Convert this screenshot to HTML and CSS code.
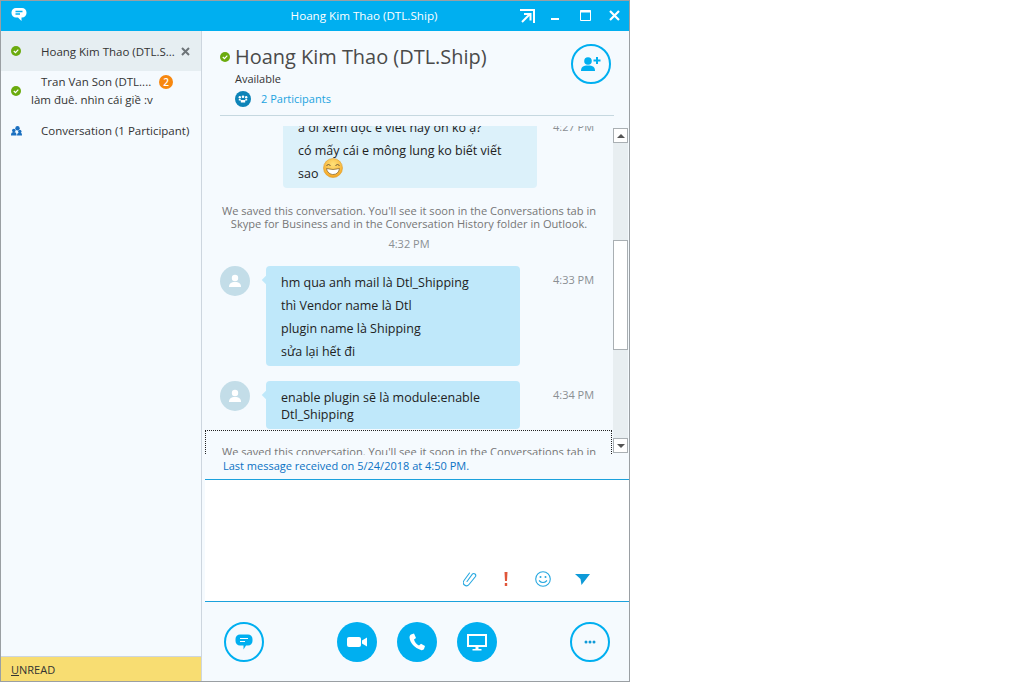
FILE: index.html
```html
<!DOCTYPE html>
<html lang="vi">
<head>
<meta charset="utf-8">
<title>Hoang Kim Thao (DTL.Ship)</title>
<link rel="stylesheet" href="styles.css">
</head>
<body>
<div class="window">
  <header class="titlebar">
    <svg class="app-icon" width="16" height="16" viewBox="0 0 16 16"><path d="M5 1h6a4.500 4.500 0 0 1 4.500 4.500v.5A4.500 4.500 0 0 1 11 10.500h-.5V14L7 10.500H5A4.500 4.500 0 0 1 .5 6v-.5A4.500 4.500 0 0 1 5 1z" fill="#fff"/><path d="M4.500 4.500h7M4.500 7h4.500" stroke="#00aff0" stroke-width="1.300"/></svg>
    <div class="title">Hoang Kim Thao (DTL.Ship)</div>
    <div class="win-controls">
      <svg class="wc wc-pop" width="15" height="14" viewBox="0 0 15 14"><path d="M0 1h14v13M2 13l8-8M4 5h6.500v6.500" fill="none" stroke="#fff" stroke-width="2"/></svg>
      <svg class="wc wc-min" width="9" height="14" viewBox="0 0 9 14"><path d="M0 11h8" stroke="#fff" stroke-width="2"/></svg>
      <svg class="wc wc-max" width="11" height="11" viewBox="0 0 11 11"><path d="M.5.500h10v10H.500z" fill="none" stroke="#fff"/><path d="M0 1.500h11" stroke="#fff" stroke-width="2"/></svg>
      <svg class="wc wc-close" width="11" height="11" viewBox="0 0 11 11"><path d="M1 1l9 9M10 1l-9 9" stroke="#fff" stroke-width="2.200"/></svg>
    </div>
  </header>
  <div class="body">
    <aside class="sidebar">
      <div class="conv conv-active">
        <span class="dot"><svg width="10" height="10" viewBox="0 0 10 10"><circle cx="5" cy="5" r="5" fill="#6bab0e"/><path d="M2.800 5l1.700 1.700 2.800-3" fill="none" stroke="#fff" stroke-width="1.200"/></svg></span>
        <span class="conv-name">Hoang Kim Thao (DTL.S...</span>
        <svg class="conv-x" width="9" height="9" viewBox="0 0 9 9"><path d="M1 1l7 7M8 1l-7 7" stroke="#6d7478" stroke-width="2"/></svg>
      </div>
      <div class="conv conv-two">
        <span class="dot"><svg width="10" height="10" viewBox="0 0 10 10"><circle cx="5" cy="5" r="5" fill="#6bab0e"/><path d="M2.800 5l1.700 1.700 2.800-3" fill="none" stroke="#fff" stroke-width="1.200"/></svg></span>
        <div class="conv-lines">
          <div class="conv-top"><span class="conv-name">Tran Van Son (DTL....</span><span class="badge">2</span></div>
          <div class="conv-sub">làm đuê. nhìn cái giề :v</div>
        </div>
      </div>
      <div class="conv conv-group">
        <span class="dot"><svg width="11" height="10" viewBox="0 0 11 10"><circle cx="6.500" cy="2.200" r="2.200" fill="#1a6fc0"/><circle cx="2.800" cy="4.500" r="1.800" fill="#1a6fc0"/><circle cx="8.800" cy="5.500" r="1.700" fill="#1a6fc0"/><path d="M0 9c0-2 1-3 2.800-3s2.800 1 2.800 3.500H0zM6 9.500c0-2 1-3 2.800-3S11 7.500 11 9.500z" fill="#1a6fc0"/></svg></span>
        <span class="conv-name">Conversation (1 Participant)</span>
      </div>
      <div class="unread"><span class="ul">U</span>NREAD</div>
    </aside>
    <main class="main">
      <section class="head">
        <div class="head-info">
          <div class="head-name">
            <svg width="10" height="10" viewBox="0 0 10 10"><circle cx="5" cy="5" r="5" fill="#6bab0e"/><path d="M2.800 5l1.700 1.700 2.800-3" fill="none" stroke="#fff" stroke-width="1.200"/></svg>
            <h1>Hoang Kim Thao (DTL.Ship)</h1>
          </div>
          <div class="presence">Available</div>
          <div class="participants">
            <svg width="16" height="16" viewBox="0 0 16 16"><circle cx="8" cy="8" r="8" fill="#0d84b8"/><circle cx="4.800" cy="6.300" r="1.200" fill="#fff"/><circle cx="8" cy="5.800" r="1.300" fill="#fff"/><circle cx="11.200" cy="6.300" r="1.200" fill="#fff"/><path d="M3.800 8h1.900v1h4.600V8h1.900v1.500h-2v2H5.800v-2h-2z" fill="#fff"/></svg>
            <span>2 Participants</span>
          </div>
        </div>
        <button class="circle outline add-btn"><svg width="22" height="16" viewBox="0 0 22 16"><circle cx="8" cy="5" r="3.800" fill="#00aff0"/><path d="M1 15c0-4 2-5.500 7-5.500s7 1.500 7 5.500z" fill="#00aff0"/><path d="M17 1v7M13.500 4.500h7" stroke="#00aff0" stroke-width="2"/></svg></button>
      </section>
      <div class="rule"></div>
      <section class="transcript">
        <div class="log">
          <div class="log-inner">
            <div class="msg msg-first">
              <div class="bubble light">
                <p>à ơi xem đọc e viết này ổn ko ạ?</p>
                <p>có mấy cái e mông lung ko biết viết</p>
                <p class="emoji-line">sao <svg class="emoji" width="20" height="20" viewBox="0 0 20 20"><defs><radialGradient id="eg" cx="50%" cy="30%" r="70%"><stop offset="0" stop-color="#ffe27a"/><stop offset="1" stop-color="#f5a623"/></radialGradient></defs><circle cx="10" cy="10" r="9.500" fill="url(#eg)" stroke="#dd9a2a" stroke-width=".6"/><path d="M3.500 7.500q2-2 4 0M12.500 7.500q2-2 4 0" fill="none" stroke="#6d5a3a" stroke-width="1"/><path d="M3.500 10.500q6.500 2 13 0-1 6-6.500 6s-5.500 0-6.500-6z" fill="#fff" stroke="#8a6a30" stroke-width=".8"/></svg></p>
              </div>
              <time>4:27 PM</time>
            </div>
            <div class="notice">We saved this conversation. You'll see it soon in the Conversations tab in Skype for Business and in the Conversation History folder in Outlook.</div>
            <div class="notice-time">4:32 PM</div>
            <div class="msg">
              <span class="avatar"><svg width="14" height="14" viewBox="0 0 14 14"><circle cx="7" cy="4" r="3.200" fill="#fff"/><path d="M1 13c0-3.500 2-5 6-5s6 1.500 6 5z" fill="#fff"/></svg></span>
              <div class="bubble">
                <p>hm qua anh mail là Dtl_Shipping</p>
                <p>thì Vendor name là Dtl</p>
                <p>plugin name là Shipping</p>
                <p>sửa lại hết đi</p>
              </div>
              <time>4:33 PM</time>
            </div>
            <div class="msg">
              <span class="avatar"><svg width="14" height="14" viewBox="0 0 14 14"><circle cx="7" cy="4" r="3.200" fill="#fff"/><path d="M1 13c0-3.500 2-5 6-5s6 1.500 6 5z" fill="#fff"/></svg></span>
              <div class="bubble tight">
                <p>enable plugin sẽ là module:enable Dtl_Shipping</p>
              </div>
              <time>4:34 PM</time>
            </div>
            <div class="notice">We saved this conversation. You'll see it soon in the Conversations tab in Skype for Business and in the Conversation History folder in Outlook.</div>
          </div>
          <div class="focus-box"></div>
        </div>
        <div class="scrollbar">
          <div class="sb-btn"><i class="arrow up"></i></div>
          <div class="sb-gap-top"></div>
          <div class="sb-thumb"></div>
          <div class="sb-gap-bottom"></div>
          <div class="sb-btn"><i class="arrow down"></i></div>
        </div>
      </section>
      <div class="last-msg">Last message received on 5/24/2018 at 4:50 PM.</div>
      <section class="compose">
        <div class="compose-tools">
          <svg width="14" height="16" viewBox="0 0 14 16"><path d="M4 10.500L9.500 3a2 2 0 0 1 3 2.500L6 13.500a3.200 3.200 0 0 1-5-4L6.500 2" fill="none" stroke="#27a8e0" stroke-width="1.100" stroke-linecap="round"/></svg>
          <svg width="4" height="14" viewBox="0 0 4 14"><path d="M.5 0h3l-.5 9H1zM.8 11h2.400v3H.8z" fill="#e0563a"/></svg>
          <svg width="16" height="16" viewBox="0 0 16 16"><circle cx="8" cy="8" r="7.300" fill="none" stroke="#27a8e0" stroke-width="1.100"/><circle cx="5.500" cy="6" r="1" fill="#27a8e0"/><circle cx="10.500" cy="6" r="1" fill="#27a8e0"/><path d="M4 9.500q4 4 8 0" fill="none" stroke="#27a8e0" stroke-width="1.100"/></svg>
          <svg width="15" height="11" viewBox="0 0 15 11"><path d="M0 0h15L6.500 11 5.500 5z" fill="#0e9ad8"/></svg>
        </div>
      </section>
      <section class="actions">
        <button class="circle outline"><svg width="18" height="16" viewBox="0 0 18 16"><path d="M5 .5h8a4.500 4.500 0 0 1 4.500 4.500v2A4.500 4.500 0 0 1 13 11.500h-2L8.500 15.500v-4H5A4.500 4.500 0 0 1 .5 7V5A4.500 4.500 0 0 1 5 .5z" fill="#00aff0"/><path d="M5 4.500h8M5 7.500h5" stroke="#fff" stroke-width="1.100"/></svg></button>
        <div class="action-mid">
          <button class="circle solid"><svg width="20" height="10" viewBox="0 0 20 10"><rect x="0" y="0" width="14" height="10" rx="2" fill="#fff"/><path d="M15 3.500L20 .5v9l-5-3z" fill="#fff"/></svg></button>
          <button class="circle solid"><svg width="18" height="18" viewBox="0 0 18 18"><path d="M3 1.500L6 .5l2 4.500-2 1.500c.5 2.500 2.500 4.800 5 6l2-1.800 4 2.300-1 3c-.5 1-2 1.500-3 1C6.500 15 2 10 1.500 4.500c0-1.300.5-2.500 1.500-3z" fill="#fff"/></svg></button>
          <button class="circle solid"><svg width="20" height="17" viewBox="0 0 20 17"><path d="M1 1h18v11H1z" fill="none" stroke="#fff" stroke-width="2"/><path d="M8.500 13h3v2h-3zM5.500 15h9v1.500h-9z" fill="#fff"/></svg></button>
        </div>
        <button class="circle outline"><svg width="12" height="4" viewBox="0 0 12 4"><circle cx="2" cy="2" r="1.500" fill="#0e9ad8"/><circle cx="6" cy="2" r="1.500" fill="#0e9ad8"/><circle cx="10" cy="2" r="1.500" fill="#0e9ad8"/></svg></button>
      </section>
    </main>
  </div>
</div>
</body>
</html>
```
FILE: styles.css
```css
* { box-sizing: border-box; }
html, body { margin: 0; padding: 0; background: #fff; }
body { font-family: "Open Sans", "Noto Sans", sans-serif; font-size: 11.500px; color: #333; }
svg { display: block; flex: none; }
p { margin: 0; }

.window {
  width: 630px; height: 682px;
  border: 1px solid #9a9fa3;
  display: flex; flex-direction: column;
  background: #f5fafe;
}

.titlebar {
  height: 30px; flex: none;
  background: #00aff0; color: #fff;
  display: flex; align-items: center;
  padding-left: 10px;
}
.app-icon { margin-bottom: 2px; }
.title {
  flex: 1; text-align: center; font-size: 11.650px;
  padding-left: 165px;
  margin-right: -15px;
  padding-bottom: 1px;
}
.win-controls { display: flex; align-items: center; width: 108px; flex: none; padding-right: 9px; }
.wc-pop { margin-left: -1px; margin-bottom: 1px; }
.wc-min { margin-left: 16px; margin-bottom: 3px; }
.wc-max { margin-left: 20px; margin-bottom: 2px; }
.wc-close { margin-left: 18px; margin-bottom: 2px; }

.body { flex: 1; display: flex; min-height: 0; }

.sidebar {
  width: 201px; flex: none;
  border-right: 1px solid #cdd6df;
  display: flex; flex-direction: column;
}
.conv { display: flex; align-items: center; height: 40px; padding-left: 10px; }
.dot { width: 30px; flex: none; }
.conv-active { background: #e6eef2; }
.conv-active .conv-name { flex: 1; }
.conv-x { margin-right: 11px; }
.conv-two { height: 41px; }
.conv-two .dot { margin-top: -2px; }
.conv-lines { margin-left: -10px; padding-bottom: 3px; }
.conv-top { padding-left: 10px; display: flex; align-items: center; }
.conv-sub { line-height: 17px; }
.conv-top .conv-name { line-height: 18px; }
.badge {
  width: 14px; height: 14px; border-radius: 50%;
  background: #f7870f; color: #fff;
  font-size: 10px; font-weight: 600; line-height: 14px; text-align: center;
  margin-left: 8px;
}
.conv-group { height: 40px; }
.conv-group .conv-name { padding-bottom: 3px; }
.conv-group .dot { margin-top: -2px; }
.unread {
  margin-top: auto; height: 25px;
  background: #f8dd72; border-top: 1px solid #cdd6df;
  padding-left: 10px; line-height: 25px; font-size: 11px;
}
.ul { text-decoration: underline; }

.main { flex: 1; min-width: 0; display: flex; flex-direction: column; padding-left: 3px; }

.head {
  height: 84px; flex: none;
  display: flex; justify-content: space-between;
  padding: 12px 18px 0 15px;
}
.head-name { display: flex; align-items: center; gap: 5px; height: 28px; }
.head-name h1 { margin: 0; font-size: 19.950px; font-weight: 400; color: #4a4a4a; line-height: 28px; }
.presence { margin-left: 15px; font-size: 11px; line-height: 17px; margin-top: -1px; }
.participants { display: flex; align-items: center; gap: 10px; margin: 3px 0 0 15px; color: #1ba3e0; font-size: 11px; line-height: 17px; }

.circle {
  width: 40px; height: 40px; border-radius: 50%;
  padding: 0; background: transparent; border: none;
  display: flex; align-items: center; justify-content: center;
  flex: none;
}
.outline { border: 2px solid #00aff0; }
.solid { background: #00aff0; }
.add-btn { margin-top: 1px; }

.rule { height: 1px; flex: none; margin: 0 0 0 15px; width: 394px; background: #c6d8e0; }

.transcript { height: 328px; flex: none; display: flex; margin-top: 10px; }
.log { width: 408px; flex: none; overflow: hidden; position: relative; height: 329px; }
.log-inner { margin-top: -10px; }

.msg { display: flex; margin-left: 15px; }
.msg + .msg { margin-top: 15px; }
.msg-first { padding-left: 63px; }
.avatar {
  width: 30px; height: 30px; border-radius: 50%; background: #c3dde8;
  display: flex; align-items: center; justify-content: center; flex: none;
  margin-right: 16px;
}
.bubble {
  width: 254px; height: 100px; padding: 5px 15px 0;
  background: #bfe8fa; border-radius: 4px;
  color: #222; font-size: 12.500px; position: relative; flex: none;
}
.bubble::before {
  content: ""; position: absolute; left: -3px; top: 11px;
  width: 6px; height: 6px; background: inherit; transform: rotate(45deg);
}
.bubble p { line-height: 23px; }
.light { background: #dcf1fa; height: 72px; padding-top: 0; }
.light::before { display: none; }
.tight { height: 48px; padding-top: 8px; }
.tight p { line-height: 17px; }
.emoji-line { display: flex; align-items: center; gap: 5px; }
.emoji { margin-top: -12px; }
time { margin-left: 33px; padding-top: 6px; font-size: 11px; color: #8a8f93; white-space: nowrap; }
.msg-first time { margin-left: 16px; padding-top: 4px; line-height: 14px; }

.notice { margin: 16px 0 0; padding: 0 10px; text-align: center; font-size: 11.100px; line-height: 13px; color: #767676; }
.notice-time { text-align: center; font-size: 11px; color: #8a8f93; margin-top: 7px; line-height: 14px; margin-bottom: 15px; }

.focus-box { position: absolute; left: 0; right: 1px; top: 304px; height: 40px; border: 1px dotted #222; }

.scrollbar { width: 15px; padding-top: 2px; height: 327px; display: flex; flex-direction: column; }
.sb-btn { height: 15px; border: 1px solid #a9afb3; background: #fff; display: flex; align-items: center; justify-content: center; flex: none; }
.sb-gap-top { height: 97px; background: #e8eef1; }
.sb-thumb { height: 110px; background: #fff; border: 1px solid #a9afb3; }
.sb-gap-bottom { flex: 1; background: #e8eef1; }
.arrow { width: 0; height: 0; border-left: 4px solid transparent; border-right: 4px solid transparent; display: block; }
.up { border-bottom: 4px solid #555; }
.down { border-top: 4px solid #555; }

.last-msg { height: 25px; flex: none; margin-top: 1px; padding-left: 18px; color: #0a72c4; font-size: 11px; line-height: 22px; border-bottom: 1px solid #1ba1dc; }

.compose { height: 122px; flex: none; background: #fff; border-bottom: 1px solid #1ba1dc; display: flex; align-items: flex-end; justify-content: flex-end; }
.compose-tools { display: flex; align-items: center; padding: 0 39px 14px 0; }
.compose-tools svg:nth-child(2) { margin-left: 27px; }
.compose-tools svg:nth-child(3) { margin-left: 27px; }
.compose-tools svg:nth-child(4) { margin-left: 24px; }

.actions { flex: 1; display: flex; align-items: center; justify-content: space-between; padding: 1px 19px 0; }
.action-mid { display: flex; gap: 20px; margin-left: -1px; }
```
